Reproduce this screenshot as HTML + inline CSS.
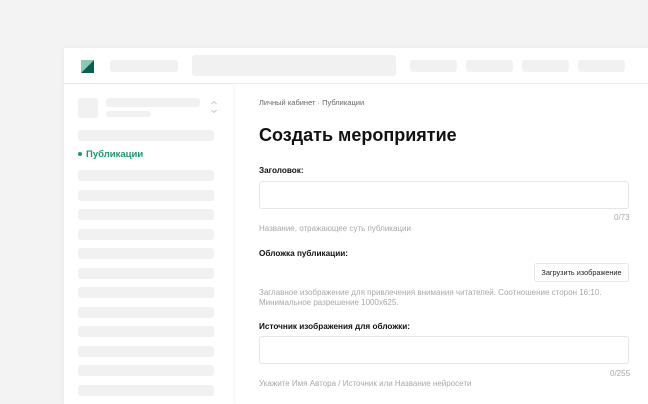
<!DOCTYPE html>
<html style="width:648px;height:404px;overflow:hidden"><head><meta charset="utf-8"><style>
*{margin:0;padding:0;box-sizing:border-box}
body{width:648px;height:404px;background:#f3f3f3;font-family:"Liberation Sans",sans-serif;position:relative;overflow:hidden}
.card{position:absolute;left:64px;top:48px;width:584px;height:356px;background:#fff;box-shadow:0 0 6px rgba(0,0,0,.05)}
.hdr{position:absolute;left:0;top:0;width:584px;height:36px;border-bottom:1px solid #ececec}
.g{position:absolute;background:#f1f1f1;border-radius:3px}
.side{position:absolute;left:0;top:37px;width:169px;height:319px;background:#fff;box-shadow:2px 0 4px rgba(0,0,0,.04)}
.t{position:absolute;white-space:nowrap}
.inp{position:absolute;left:259px;width:370px;height:28px;border:1px solid #e6e6e6;border-radius:3px;background:#fff}
.hint{color:#a9a9a9;font-size:8px}
.lbl{font-size:8.2px;color:#111;font-weight:bold}
</style></head><body>
<div class="card">
<div class="hdr">
<svg style="position:absolute;left:17px;top:12px" width="13" height="13"><polygon points="0,0 13,0 0,13" fill="#86cdb0"/><polygon points="13,0 13,13 0,13" fill="#0d5e52"/></svg>
<div class="g" style="left:46px;top:12px;width:68px;height:12px"></div>
<div class="g" style="left:128px;top:7px;width:204px;height:21px"></div>
<div class="g" style="left:346px;top:12px;width:47px;height:12px"></div>
<div class="g" style="left:402px;top:12px;width:47px;height:12px"></div>
<div class="g" style="left:458px;top:12px;width:47px;height:12px"></div>
<div class="g" style="left:514px;top:12px;width:47px;height:12px"></div>
</div>
</div>
<div class="side" style="left:64px;top:85px">
<div class="g" style="left:14px;top:13px;width:20px;height:20px"></div>
<div class="g" style="left:42px;top:13px;width:94px;height:9px"></div>
<div class="g" style="left:42px;top:26px;width:45px;height:6px"></div>
<svg style="position:absolute;left:146px;top:15px" width="8" height="15"><path d="M1.5 4 L4 1.5 L6.5 4 M1.5 10 L4 12.5 L6.5 10" fill="none" stroke="#c4c4c4" stroke-width="0.9"/></svg>
<div class="g" style="left:14px;top:45px;width:136px;height:11px"></div>
<div class="t" style="left:14px;top:64px;color:#1a9a6a;font-size:9.5px;font-weight:bold"><span style="display:inline-block;width:4px;height:4px;border-radius:50%;background:#1a9a6a;vertical-align:middle;margin-right:4px"></span>Публикации</div>
<div class="g" style="left:14px;top:85px;width:136px;height:11px"></div>
<div class="g" style="left:14px;top:105px;width:136px;height:11px"></div>
<div class="g" style="left:14px;top:124px;width:136px;height:11px"></div>
<div class="g" style="left:14px;top:144px;width:136px;height:11px"></div>
<div class="g" style="left:14px;top:163px;width:136px;height:11px"></div>
<div class="g" style="left:14px;top:183px;width:136px;height:11px"></div>
<div class="g" style="left:14px;top:202px;width:136px;height:11px"></div>
<div class="g" style="left:14px;top:222px;width:136px;height:11px"></div>
<div class="g" style="left:14px;top:241px;width:136px;height:11px"></div>
<div class="g" style="left:14px;top:261px;width:136px;height:11px"></div>
<div class="g" style="left:14px;top:280px;width:136px;height:11px"></div>
<div class="g" style="left:14px;top:300px;width:136px;height:11px"></div>
</div>
<div class="t" style="left:259px;top:98px;font-size:7.5px;color:#666">Личный кабинет · Публикации</div>
<div class="t" style="left:259px;top:125px;font-size:18px;font-weight:bold;color:#111">Создать мероприятие</div>
<div class="t lbl" style="top:166px;left:259px">Заголовок:</div>
<div class="inp" style="top:181px"></div>
<div class="t hint" style="left:614px;top:213px">0/73</div>
<div class="t hint" style="left:259px;top:224px">Название, отражающее суть публикации</div>
<div class="t lbl" style="top:249px;left:259px">Обложка публикации:</div>
<div class="t" style="left:534px;top:263px;width:95px;height:19px;border:1px solid #e6e6e6;border-radius:3px;font-size:7.3px;color:#222;text-align:center;line-height:17px">Загрузить изображение</div>
<div class="t hint" style="left:259px;top:288px;line-height:10px">Заглавное изображение для привлечения внимания читателей. Соотношение сторон 16:10.<br>Минимальное разрешение 1000x625.</div>
<div class="t lbl" style="top:322px;left:259px">Источник изображения для обложки:</div>
<div class="inp" style="top:336px"></div>
<div class="t hint" style="left:610px;top:369px">0/255</div>
<div class="t hint" style="left:259px;top:379px">Укажите Имя Автора / Источник или Название нейросети</div>
</body></html>
